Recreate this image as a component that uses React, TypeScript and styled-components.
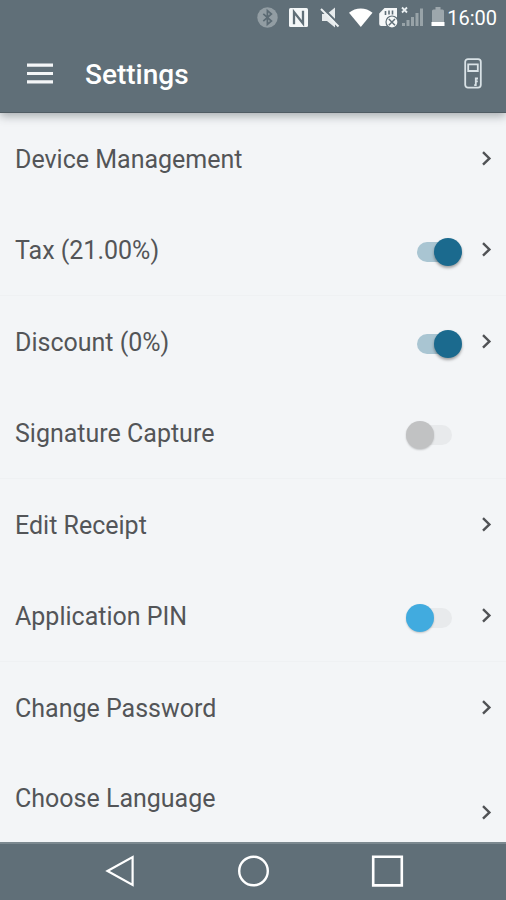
import React, { useState } from "react";
import styled, { createGlobalStyle } from "styled-components";

const slate = "#606f78";

const GlobalStyle = createGlobalStyle`
  * { box-sizing: border-box; }
  body { margin: 0; background: ${slate}; font-family: Roboto, "Liberation Sans", sans-serif; }
  button { font: inherit; color: inherit; background: none; border: 0; padding: 0; cursor: pointer; }
`;

const Screen = styled.div`
  min-height: 100vh;
  display: flex;
  flex-direction: column;
  background: #f3f5f7;
`;

const TopArea = styled.header`
  position: relative;
  z-index: 1;
  background: ${slate};
  color: #fff;
  border-bottom: 1px solid #505c63;
  box-shadow: 0 3px 9px rgba(50, 60, 65, 0.4);
`;

const StatusBar = styled.div`
  height: 36px;
  padding: 0 9px;
  display: flex;
  align-items: center;
  justify-content: flex-end;
  font-size: 20px;
`;

const StatusIcons = styled.svg`
  flex: none;
`;

const Toolbar = styled.div`
  height: 76px;
  padding: 0 24px 0 26px;
  display: flex;
  align-items: center;
`;

const IconButton = styled.button`
  display: flex;
`;

const Title = styled.h1`
  flex: 1;
  margin: 0 0 0 31px;
  padding-top: 2px;
  font-size: 28px;
  line-height: 32px;
  font-weight: 500;
`;

const List = styled.ul`
  flex: 1;
  margin: 0;
  padding: 0;
  list-style: none;
  color: #535558;
  font-size: 25px;
  line-height: 32px;
`;

const Item = styled.li<{ $last: boolean }>`
  height: ${(p) => (p.$last ? 88 : 92)}px;
  padding: 0 14px 0 15px;
  display: flex;
  align-items: center;
  gap: 19px;

  &:nth-child(even) {
    height: ${(p) => (p.$last ? 88 : 91)}px;
    border-bottom: 1px solid ${(p) => (p.$last ? "transparent" : "#eff1f3")};
  }
`;

const Name = styled.label`
  flex: 1;
  padding-top: 2px;
  cursor: pointer;
`;

const LinkRow = styled.button<{ $low: boolean }>`
  flex: 1;
  display: flex;
  align-items: center;
  justify-content: space-between;
  text-align: left;

  span {
    padding-top: 2px;
  }

  svg {
    margin-top: ${(p) => (p.$low ? 30 : 0)}px;
  }
`;

const Arrow = styled.svg`
  display: block;
  width: 11px;
  height: 18px;
  fill: none;
  stroke: #505255;
  stroke-width: 2.4;
`;

const ArrowSpace = styled.span`
  width: 11px;
`;

const Switch = styled.input<{ $off: string }>`
  appearance: none;
  position: relative;
  flex: none;
  width: 56px;
  height: 28px;
  margin: 3px 0 0;
  cursor: pointer;

  &::before {
    content: "";
    position: absolute;
    inset: 4px 10px 4px 11px;
    border-radius: 10px;
    background: #e8eaec;
  }

  &::after {
    content: "";
    position: absolute;
    left: 0;
    top: 0;
    width: 28px;
    height: 28px;
    border-radius: 50%;
    background: ${(p) => p.$off};
    box-shadow: 0 1px 2px rgba(0, 0, 0, 0.2);
  }

  &:checked::before { background: #a9c5d2; }
  &:checked::after {
    left: 28px;
    background: #1b6a8e;
    box-shadow: 0 2px 3px rgba(0, 0, 0, 0.35);
  }
`;

const NavBar = styled.nav`
  height: 60px;
  padding-bottom: 4px;
  border-top: 2px solid #7c8990;
  background: ${slate};
  display: flex;
  justify-content: center;
  align-items: center;
  gap: 100px;
  color: #fff;
`;

type Setting = {
  id: string;
  name: string;
  toggle?: { on: boolean; off: string };
  arrow: boolean;
};

const settings: Setting[] = [
  { id: "device", name: "Device Management", arrow: true },
  { id: "tax", name: "Tax (21.00%)", toggle: { on: true, off: "#41abdf" }, arrow: true },
  { id: "discount", name: "Discount (0%)", toggle: { on: true, off: "#41abdf" }, arrow: true },
  { id: "signature", name: "Signature Capture", toggle: { on: false, off: "#c1c2c3" }, arrow: false },
  { id: "receipt", name: "Edit Receipt", arrow: true },
  { id: "pin", name: "Application PIN", toggle: { on: false, off: "#41abdf" }, arrow: true },
  { id: "password", name: "Change Password", arrow: true },
  { id: "language", name: "Choose Language", arrow: true },
];

const Chevron = () => (
  <Arrow viewBox="0 0 11 18" aria-hidden="true">
    <path d="M2 2.2 8.4 8.4 2 14.6" />
  </Arrow>
);

function SettingItem({ item, last }: { item: Setting; last: boolean }) {
  const [on, setOn] = useState(item.toggle?.on ?? false);
  if (!item.toggle) {
    return (
      <Item $last={last}>
        <LinkRow type="button" $low={last}>
          <span>{item.name}</span>
          <Chevron />
        </LinkRow>
      </Item>
    );
  }
  return (
    <Item $last={last}>
      <Name htmlFor={item.id}>{item.name}</Name>
      <Switch
        id={item.id}
        type="checkbox"
        role="switch"
        checked={on}
        onChange={(e) => setOn(e.target.checked)}
        $off={item.toggle.off}
      />
      {item.arrow ? (
        <IconButton type="button" aria-label={`Open ${item.name}`}>
          <Chevron />
        </IconButton>
      ) : (
        <ArrowSpace />
      )}
    </Item>
  );
}

const PhoneStatus = () => (
  <StatusIcons width="191" height="24" viewBox="0 0 191 24" fill="none" aria-hidden="true">
    <circle cx="11.5" cy="11.5" r="10.2" fill="#929da3" />
    <path d="M7.3 7.8 15.4 15l-4 3.4V4.6l4 3.4-8.1 7.2" stroke="#5b6a73" strokeWidth="1.7" />
    <rect x="33" y="2" width="19" height="19" rx="1.5" fill="#f4f7f8" />
    <path d="M38 18.2V6L47 17.4V4.8" stroke={slate} strokeWidth="2.3" />
    <path d="M66 8h5l8-6.5v20L71 15h-5z" fill="#e7ebed" />
    <path d="M66.5 1.8 83.5 18.8" stroke={slate} strokeWidth="2" />
    <path d="M65 3 82.5 20.5" stroke="#edf1f2" strokeWidth="2" />
    <path d="M93 6.7C99.5 1 110 1 116.5 6.7L104.8 21z" fill="#fff" />
    <path d="M128.5 2H141v18h-15.8a2 2 0 0 1-2-2V7.5z" fill="#f5f7f8" />
    <path d="M129.5 5v4M133 4.5v4M136.5 4.5v4" stroke={slate} strokeWidth="1.6" />
    <circle cx="136" cy="16" r="6" fill="#f6f8f8" stroke={slate} strokeWidth="1.2" />
    <path d="m132.8 13 6.2 6.2M139 13l-6.2 6.2" stroke={slate} strokeWidth="1.5" />
    <path d="m146 1.5 5 5m0-5-5 5" stroke="#e8eef1" strokeWidth="1.8" />
    <path d="M147.5 17v3M152 14v6M156.5 11v9M161 7v13M165.5 2.5v17.5" stroke="#98a3a8" strokeWidth="3" />
    <path d="M179.5 1h5v2.5h2a1.5 1.5 0 0 1 1.5 1.5v15h-12V5a1.5 1.5 0 0 1 1.5-1.5h2z" fill="#9da7ac" />
    <path d="M175.5 16h13v4h-13z" fill="#fff" />
  </StatusIcons>
);

export default function App() {
  return (
    <>
      <GlobalStyle />
      <Screen>
        <TopArea>
          <StatusBar>
            <PhoneStatus />
            <time>16:00</time>
          </StatusBar>
          <Toolbar>
            <IconButton type="button" aria-label="Menu">
              <svg width="28" height="22" viewBox="0 0 28 22">
                <path d="M1 2.2h26M1 10.5h26M1 18.8h26" stroke="#f4f6f7" strokeWidth="3.2" />
              </svg>
            </IconButton>
            <Title>Settings</Title>
            <IconButton type="button" aria-label="Card reader">
              <svg width="18" height="32" viewBox="0 0 18 32" fill="none" stroke="#d9e2e6" strokeWidth="1.8">
                <path d="M4 1.2h10c1.6 0 2.8 1.2 2.8 2.6v23c0 1.6-1.2 2.8-2.8 2.8H4c-1.6 0-2.8-1.2-2.8-2.8v-23c0-1.4 1.2-2.6 2.8-2.6z" />
                <path d="M4.2 6.4h9.6v6.6H4.2zM14 20.5h-2.2v2.8h2M11.8 23v4.2h-1.6" />
              </svg>
            </IconButton>
          </Toolbar>
        </TopArea>
        <List>
          {settings.map((item, i) => (
            <SettingItem key={item.id} item={item} last={i === settings.length - 1} />
          ))}
        </List>
        <NavBar>
          <IconButton type="button" aria-label="Back">
            <svg width="34" height="34" viewBox="0 0 34 34" fill="none" stroke="#fff" strokeWidth="2.2">
              <path d="M5.5 17 30.6 3v28z" />
            </svg>
          </IconButton>
          <IconButton type="button" aria-label="Home">
            <svg width="34" height="34" viewBox="0 0 34 34" fill="none" stroke="#fff" strokeWidth="2.4">
              <circle cx="17.5" cy="17" r="14.3" />
            </svg>
          </IconButton>
          <IconButton type="button" aria-label="Recent apps">
            <svg width="34" height="34" viewBox="0 0 34 34" fill="none" stroke="#fff" strokeWidth="2.6">
              <path d="M3.2 2.8h28.6v28.6H3.2z" />
            </svg>
          </IconButton>
        </NavBar>
      </Screen>
    </>
  );
}
